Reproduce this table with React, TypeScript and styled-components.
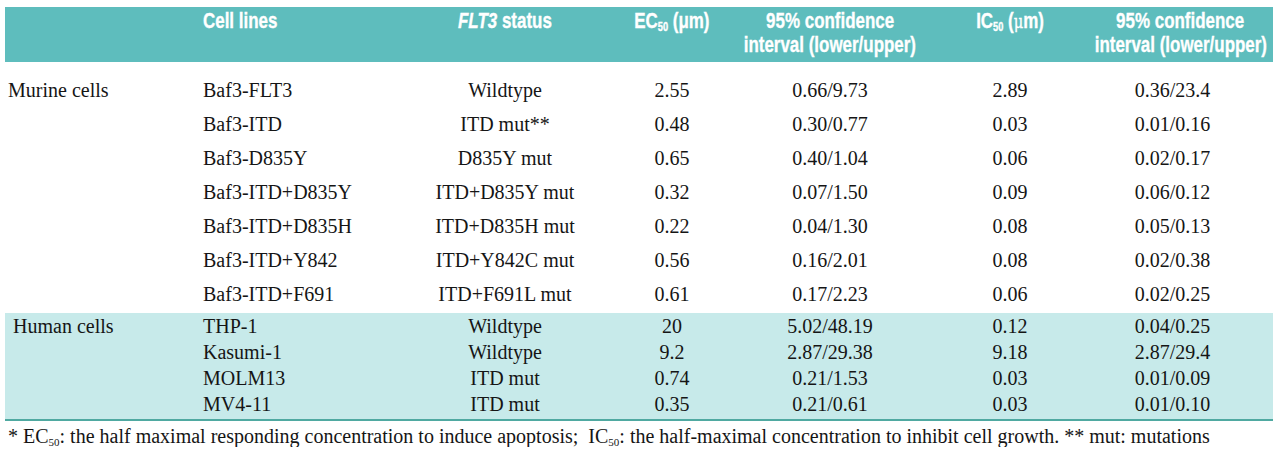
import React from "react";
import styled, { createGlobalStyle } from "styled-components";

const GlobalStyle = createGlobalStyle`
  html, body { margin: 0; padding: 0; background: #ffffff; }
  body { font-family: "Liberation Serif", "Times New Roman", serif; color: #151515; }
`;

const Page = styled.div`
  padding: 7px 7px 0 5px;
  width: 1280px;
  box-sizing: border-box;
`;

const Table = styled.table`
  width: 100%;
  table-layout: fixed;
  border-collapse: collapse;
  border-spacing: 0;
`;

const HeadRow = styled.tr`
  background: #5ebdbd;
`;

const HeadCell = styled.th<{ $pl?: number; $pr?: number }>`
  color: #ffffff;
  font-family: "Liberation Sans", Arial, sans-serif;
  font-weight: 700;
  font-size: 22px;
  line-height: 24px;
  padding: 2px ${(p) => p.$pr ?? 0}px 5px ${(p) => p.$pl ?? 0}px;
  vertical-align: top;
  -webkit-text-stroke: 0.35px #ffffff;
`;

const HeadInner = styled.div<{ $left?: boolean }>`
  display: flex;
  flex-direction: column;
  align-items: ${(p) => (p.$left ? "flex-start" : "center")};
`;

const HeadLine = styled.span<{ $left?: boolean }>`
  display: block;
  white-space: nowrap;
  transform: scaleX(0.77);
  transform-origin: ${(p) => (p.$left ? "left center" : "center center")};
`;

const Group = styled.tbody<{ $shaded?: boolean }>`
  background: ${(p) => (p.$shaded ? "#c7eaea" : "transparent")};
  border-bottom: ${(p) => (p.$shaded ? "2px solid #4fa9a1" : "none")};
`;

const Cell = styled.td<{
  $align?: string;
  $pl?: number;
  $pr?: number;
  $pt?: number;
  $pb?: number;
  $lh: number;
}>`
  font-family: "Liberation Serif", "Times New Roman", serif;
  font-size: 20px;
  line-height: ${(p) => p.$lh}px;
  padding: ${(p) => p.$pt ?? 0}px ${(p) => p.$pr ?? 0}px ${(p) => p.$pb ?? 0}px
    ${(p) => p.$pl ?? 0}px;
  text-align: ${(p) => p.$align ?? "center"};
  vertical-align: top;
  white-space: nowrap;
`;

const Sub = styled.sub<{ $size: number }>`
  font-size: ${(p) => p.$size}px;
  vertical-align: -3px;
  line-height: 0;
`;

const Italic = styled.i`
  font-style: italic;
`;

const Mu = styled.span`
  font-family: "DejaVu Serif", "Liberation Serif", serif;
  font-weight: 400;
  font-size: 19px;
`;

const Footnote = styled.p`
  margin: 4px 0 0 3px;
  font-family: "Liberation Serif", "Times New Roman", serif;
  font-size: 20px;
  line-height: 22px;
  white-space: nowrap;
`;

type Row = [string, string, string, string, string, string, string];

const murine: Row[] = [
  ["Murine cells", "Baf3-FLT3", "Wildtype", "2.55", "0.66/9.73", "2.89", "0.36/23.4"],
  ["", "Baf3-ITD", "ITD mut**", "0.48", "0.30/0.77", "0.03", "0.01/0.16"],
  ["", "Baf3-D835Y", "D835Y mut", "0.65", "0.40/1.04", "0.06", "0.02/0.17"],
  ["", "Baf3-ITD+D835Y", "ITD+D835Y mut", "0.32", "0.07/1.50", "0.09", "0.06/0.12"],
  ["", "Baf3-ITD+D835H", "ITD+D835H mut", "0.22", "0.04/1.30", "0.08", "0.05/0.13"],
  ["", "Baf3-ITD+Y842", "ITD+Y842C mut", "0.56", "0.16/2.01", "0.08", "0.02/0.38"],
  ["", "Baf3-ITD+F691", "ITD+F691L mut", "0.61", "0.17/2.23", "0.06", "0.02/0.25"],
];

const human: Row[] = [
  ["Human cells", "THP-1", "Wildtype", "20", "5.02/48.19", "0.12", "0.04/0.25"],
  ["", "Kasumi-1", "Wildtype", "9.2", "2.87/29.38", "9.18", "2.87/29.4"],
  ["", "MOLM13", "ITD mut", "0.74", "0.21/1.53", "0.03", "0.01/0.09"],
  ["", "MV4-11", "ITD mut", "0.35", "0.21/0.61", "0.03", "0.01/0.10"],
];

const colWidths = [190, 205, 210, 124, 192, 168, 179];

function DataRows({
  rows,
  lh,
  labelPad,
  firstPad,
  lastPad,
}: {
  rows: Row[];
  lh: number;
  labelPad: number;
  firstPad: number;
  lastPad: number;
}) {
  return (
    <>
      {rows.map((r, i) => {
        const pt = i === 0 ? firstPad : 0;
        const pb = i === rows.length - 1 ? lastPad : 0;
        return (
          <tr key={i}>
            <Cell $lh={lh} $align="left" $pl={labelPad} $pt={pt} $pb={pb}>
              {r[0]}
            </Cell>
            <Cell $lh={lh} $align="left" $pl={8} $pt={pt} $pb={pb}>
              {r[1]}
            </Cell>
            <Cell $lh={lh} $pt={pt} $pb={pb}>
              {r[2]}
            </Cell>
            <Cell $lh={lh} $pt={pt} $pb={pb}>
              {r[3]}
            </Cell>
            <Cell $lh={lh} $pt={pt} $pb={pb}>
              {r[4]}
            </Cell>
            <Cell $lh={lh} $pt={pt} $pb={pb}>
              {r[5]}
            </Cell>
            <Cell $lh={lh} $pr={22} $pt={pt} $pb={pb}>
              {r[6]}
            </Cell>
          </tr>
        );
      })}
    </>
  );
}

export default function App() {
  return (
    <Page>
      <GlobalStyle />
      <Table>
        <colgroup>
          {colWidths.map((w, i) => (
            <col key={i} style={{ width: w }} />
          ))}
        </colgroup>
        <thead>
          <HeadRow>
            <HeadCell />
            <HeadCell $pl={8}>
              <HeadInner $left>
                <HeadLine $left>Cell lines</HeadLine>
              </HeadInner>
            </HeadCell>
            <HeadCell>
              <HeadInner>
                <HeadLine>
                  <Italic>FLT3</Italic> status
                </HeadLine>
              </HeadInner>
            </HeadCell>
            <HeadCell>
              <HeadInner>
                <HeadLine>
                  EC<Sub $size={12}>50</Sub> (μm)
                </HeadLine>
              </HeadInner>
            </HeadCell>
            <HeadCell>
              <HeadInner>
                <HeadLine>95% confidence</HeadLine>
                <HeadLine>interval (lower/upper)</HeadLine>
              </HeadInner>
            </HeadCell>
            <HeadCell>
              <HeadInner>
                <HeadLine>
                  IC<Sub $size={12}>50</Sub> (<Mu>μ</Mu>m)
                </HeadLine>
              </HeadInner>
            </HeadCell>
            <HeadCell $pr={6}>
              <HeadInner>
                <HeadLine>95% confidence</HeadLine>
                <HeadLine>interval (lower/upper)</HeadLine>
              </HeadInner>
            </HeadCell>
          </HeadRow>
        </thead>
        <Group>
          <DataRows rows={murine} lh={34} labelPad={3} firstPad={11} lastPad={2} />
        </Group>
        <Group $shaded>
          <DataRows rows={human} lh={26} labelPad={8} firstPad={0} lastPad={2} />
        </Group>
      </Table>
      <Footnote>
        * EC<Sub $size={11}>50</Sub>: the half maximal responding concentration to induce
        apoptosis;&nbsp; IC<Sub $size={11}>50</Sub>: the half-maximal concentration to inhibit
        cell growth. ** mut: mutations
      </Footnote>
    </Page>
  );
}
